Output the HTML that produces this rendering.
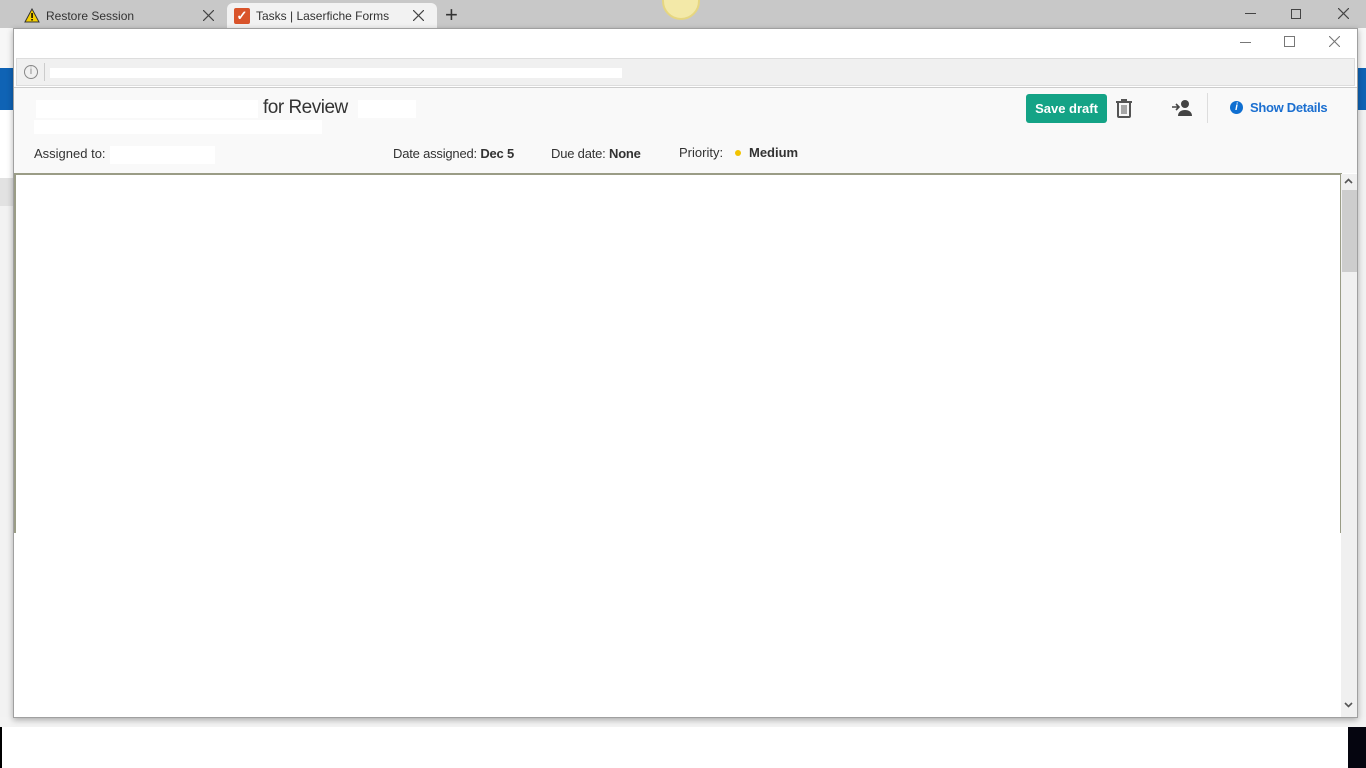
<!DOCTYPE html>
<html><head><meta charset="utf-8"><style>
*{margin:0;padding:0;box-sizing:border-box}
body{width:1366px;height:768px;overflow:hidden;background:#fff;font-family:"Liberation Sans",sans-serif;position:relative}
.abs{position:absolute}
.tab{font-size:12px;color:#333}
</style></head><body>
<div class="abs" style="left:0;top:0;width:1366px;height:28px;background:#c8c8c8"></div>
<div class="abs" style="left:227px;top:3px;width:210px;height:25px;background:#f2f2f2;border-radius:6px 6px 0 0"></div>
<svg class="abs" style="left:24px;top:8px" width="16" height="15"><polygon points="8,1 15,14 1,14" fill="#f5d000" stroke="#333" stroke-width="1"/><rect x="7.3" y="5" width="1.5" height="5" fill="#000"/><rect x="7.3" y="11" width="1.5" height="1.5" fill="#000"/></svg>
<div class="abs tab" style="left:46px;top:9px">Restore Session</div>
<svg class="abs" style="left:203px;top:10px" width="11" height="11"><path d="M0 0L11 11M11 0L0 11" stroke="#444" stroke-width="1.2"/></svg>
<div class="abs" style="left:234px;top:8px;width:16px;height:16px;background:#d9542b;border-radius:2px;color:#fff;font-size:13px;line-height:16px;text-align:center;font-weight:bold">✓</div>
<div class="abs tab" style="left:256px;top:9px">Tasks | Laserfiche Forms</div>
<svg class="abs" style="left:413px;top:10px" width="11" height="11"><path d="M0 0L11 11M11 0L0 11" stroke="#444" stroke-width="1.2"/></svg>
<div class="abs" style="left:445px;top:2px;font-size:22px;color:#333">+</div>
<div class="abs" style="left:662px;top:-18px;width:38px;height:38px;border-radius:50%;background:#f3e9a8;border:2px solid #e6d680"></div>
<div class="abs" style="left:1245px;top:13px;width:11px;height:1px;background:#444"></div>
<div class="abs" style="left:1291px;top:9px;width:10px;height:10px;border:1px solid #444"></div>
<svg class="abs" style="left:1338px;top:8px" width="11" height="11"><path d="M0 0L11 11M11 0L0 11" stroke="#444" stroke-width="1.2"/></svg>
<div class="abs" style="left:0;top:28px;width:13px;height:40px;background:#f7f7f7"></div>
<div class="abs" style="left:0;top:68px;width:13px;height:42px;background:#0f63b5"></div>
<div class="abs" style="left:0;top:178px;width:13px;height:28px;background:#e2e2e2"></div>
<div class="abs" style="left:0;top:206px;width:13px;height:521px;background:#f2f2f2"></div>
<div class="abs" style="left:1357px;top:28px;width:9px;height:40px;background:#f7f7f7"></div>
<div class="abs" style="left:1357px;top:68px;width:9px;height:42px;background:#0f63b5"></div>
<div class="abs" style="left:1357px;top:110px;width:9px;height:617px;background:#f2f2f2"></div>
<div class="abs" style="left:0;top:717px;width:1366px;height:10px;background:#f3f3f3"></div>
<div class="abs" style="left:0;top:727px;width:2px;height:41px;background:#000"></div>
<div class="abs" style="left:1348px;top:727px;width:18px;height:41px;background:#05050f"></div>
<div class="abs" style="left:13px;top:28px;width:1345px;height:690px;background:#fff;border:1px solid #a0a0a0;box-shadow:0 2px 6px rgba(0,0,0,.3)"></div>
<div class="abs" style="left:1240px;top:42px;width:11px;height:1px;background:#777"></div>
<div class="abs" style="left:1284px;top:36px;width:11px;height:11px;border:1px solid #777"></div>
<svg class="abs" style="left:1329px;top:36px" width="11" height="11"><path d="M0 0L11 11M11 0L0 11" stroke="#777" stroke-width="1.1"/></svg>
<div class="abs" style="left:16px;top:58px;width:1339px;height:28px;background:#f0f0f0;border:1px solid #ddd"></div>
<div class="abs" style="left:24px;top:65px;width:14px;height:14px;border:1px solid #888;border-radius:50%;font-size:10px;color:#888;text-align:center;line-height:12px">i</div>
<div class="abs" style="left:44px;top:63px;width:1px;height:18px;background:#ccc"></div>
<div class="abs" style="left:50px;top:68px;width:572px;height:10px;background:#fff"></div>
<div class="abs" style="left:14px;top:87px;width:1343px;height:86px;background:#f9f9f9;border-top:1px solid #ccc"></div>
<div class="abs" style="left:36px;top:100px;width:222px;height:18px;background:#fff"></div>
<div class="abs" style="left:263px;top:97px;font-size:19px;color:#333;letter-spacing:-0.5px">for Review</div>
<div class="abs" style="left:358px;top:100px;width:58px;height:18px;background:#fff"></div>
<div class="abs" style="left:34px;top:120px;width:288px;height:14px;background:#fff"></div>
<div class="abs" style="left:1026px;top:94px;width:81px;height:29px;background:#14a386;border-radius:3px;color:#fff;font-size:13px;font-weight:bold;line-height:29px;text-align:center">Save draft</div>
<svg class="abs" style="left:1115px;top:98px" width="18" height="20"><rect x="3" y="4" width="12" height="15" rx="1" fill="none" stroke="#555" stroke-width="2"/><rect x="1" y="3" width="16" height="2" fill="#555"/><rect x="6" y="1" width="6" height="2" fill="#555"/><path d="M7 7v9M9 7v9M11 7v9" stroke="#555"/></svg>
<svg class="abs" style="left:1171px;top:98px" width="22" height="20"><circle cx="14" cy="6" r="4" fill="#444"/><path d="M7 18c0-4 3-6 7-6s7 2 7 6z" fill="#444"/><path d="M1 9h6M5 6l3 3-3 3" stroke="#444" stroke-width="1.6" fill="none"/></svg>
<div class="abs" style="left:1207px;top:93px;width:1px;height:30px;background:#ddd"></div>
<div class="abs" style="left:1230px;top:101px;width:13px;height:13px;background:#0f6fd1;border-radius:50%;color:#fff;font-size:10px;font-weight:bold;font-style:italic;text-align:center;line-height:13px">i</div>
<div class="abs" style="left:1250px;top:100px;font-size:13px;font-weight:bold;color:#1b6fd0;letter-spacing:-0.3px">Show Details</div>
<div class="abs" style="left:34px;top:146px;font-size:13px;color:#333">Assigned to:</div>
<div class="abs" style="left:110px;top:146px;width:105px;height:18px;background:#fff"></div>
<div class="abs" style="left:393px;top:146px;font-size:13px;color:#333;letter-spacing:-0.2px">Date assigned: <b>Dec 5</b></div>
<div class="abs" style="left:551px;top:146px;font-size:13px;color:#333;letter-spacing:-0.2px">Due date: <b>None</b></div>
<div class="abs" style="left:679px;top:145px;font-size:13px;color:#333">Priority:</div>
<div class="abs" style="left:735px;top:150px;width:6px;height:6px;border-radius:50%;background:#f2c300"></div>
<div class="abs" style="left:749px;top:145px;font-size:13px;font-weight:bold;color:#333">Medium</div>
<div class="abs" style="left:14px;top:173px;width:1328px;height:544px;background:#fff;border:2px solid #9a9c86;border-bottom:none"></div>
<div class="abs" style="left:14px;top:533px;width:1331px;height:184px;background:#fff"></div>
<div class="abs" style="left:1341px;top:174px;width:16px;height:543px;background:#f0f0f0"></div>
<div class="abs" style="left:1342px;top:190px;width:15px;height:82px;background:#cdcdcd"></div>
<svg class="abs" style="left:1344px;top:178px" width="9" height="6"><path d="M1 5L4.5 1.5L8 5" stroke="#555" stroke-width="1.6" fill="none"/></svg>
<svg class="abs" style="left:1344px;top:702px" width="9" height="6"><path d="M1 1L4.5 4.5L8 1" stroke="#555" stroke-width="1.6" fill="none"/></svg>
</body></html>
